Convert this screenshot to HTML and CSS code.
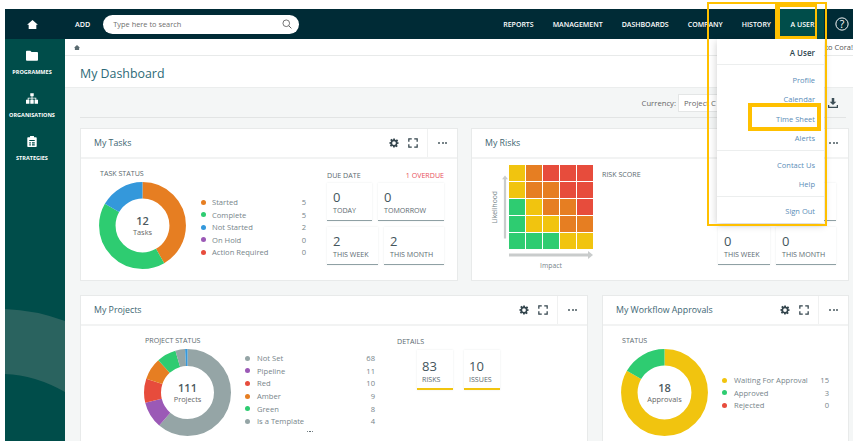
FILE: index.html
```html
<!DOCTYPE html>
<html lang="en">
<head>
<meta charset="utf-8">
<title>My Dashboard</title>
<link rel="stylesheet" href="styles.css">
</head>
<body>
<svg class="defs" width="0" height="0" aria-hidden="true">
  <defs>
    <symbol id="i-gear" viewBox="0 0 24 24"><path fill="currentColor" fill-rule="evenodd" d="M10 1h4l.6 3.2 1.9.8 2.7-1.9 2.8 2.8-1.9 2.7.8 1.9L23 10v4l-3.1.6-.8 1.9 1.9 2.7-2.8 2.8-2.7-1.9-1.9.8L14 23h-4l-.6-3.1-1.9-.8-2.7 1.9-2.8-2.8 1.9-2.7-.8-1.9L1 14v-4l3.1-.6.8-1.9-1.9-2.7 2.8-2.8 2.7 1.9 1.9-.8zM12 7.5a4.5 4.5 0 1 0 0 9 4.5 4.5 0 0 0 0-9z"/></symbol>
    <symbol id="i-expand" viewBox="0 0 24 24"><path fill="none" stroke="currentColor" stroke-width="3" d="M2 9V2h7M15 2h7v7M22 15v7h-7M9 22H2v-7"/></symbol>
    <symbol id="i-home" viewBox="0 0 24 20"><path fill="currentColor" d="M12 0 0 10.5h3.5V20h17v-9.500H24z"/></symbol>
  </defs>
</svg>

<div class="app">
  <header class="topbar">
    <a class="brand"><svg class="brand-icon"><use href="#i-home"/></svg></a>
    <a class="add">ADD</a>
    <div class="search">
      <span>Type here to search</span>
      <svg class="search-icon" viewBox="0 0 16 16"><circle cx="6.800" cy="6.800" r="5.300" fill="none" stroke="currentColor" stroke-width="1.300"/><path d="m10.800 10.800 4.200 4.200" stroke="currentColor" stroke-width="1.500"/></svg>
    </div>
    <nav class="nav">
      <a>REPORTS</a><a>MANAGEMENT</a><a>DASHBOARDS</a><a>COMPANY</a><a>HISTORY</a>
      <a class="nav-active">A USER</a>
    </nav>
    <svg class="help" viewBox="0 0 16 16"><circle cx="8" cy="8" r="7" fill="none" stroke="currentColor" stroke-width="1.100"/><text x="8" y="12.200" text-anchor="middle" class="help-q">?</text></svg>
  </header>

  <div class="layout">
    <aside class="sidebar">
      <svg class="wave" viewBox="0 0 60 402" preserveAspectRatio="none"><path d="M0 270Q30 271 60 282V353Q30 336 0 335z"/></svg>
      <a class="side-item">
        <svg class="side-icon" viewBox="0 0 14 12"><path fill="currentColor" d="M0 1.500A1 1 0 0 1 1 .5h4l1.500 1.500H13a1 1 0 0 1 1 1V11a1 1 0 0 1-1 1H1a1 1 0 0 1-1-1z"/></svg>
        <span>PROGRAMMES</span>
      </a>
      <a class="side-item">
        <svg class="side-icon" viewBox="0 0 14 12"><path fill="currentColor" d="M5 0h4v3.500H7.500V5H12v2.500h2V12h-4V7.500h1V6H7.500v1.500H9V12H5V7.500h1.500V6H3v1.500h1V12H0V7.500h2V5h4.500V3.500H5z"/></svg>
        <span>ORGANISATIONS</span>
      </a>
      <a class="side-item">
        <svg class="side-icon" viewBox="0 0 14 14"><path fill="currentColor" fill-rule="evenodd" d="M2 1.500h2.500V0h5v1.500H12a1 1 0 0 1 1 1V13a1 1 0 0 1-1 1H2a1 1 0 0 1-1-1V2.500a1 1 0 0 1 1-1zM3.500 5v1.500h7V5zm0 3v1.500h2V8zm3.500 0v1.500h3.500V8zm-3.500 2.500V12h2v-1.500zm3.500 0V12h3.500v-1.500z"/></svg>
        <span>STRATEGIES</span>
      </a>
    </aside>

    <main class="main">
      <div class="crumbs">
        <svg class="crumb-home"><use href="#i-home"/></svg>
        <span class="welcome">to Cora!</span>
      </div>
      <div class="title-row"><h1>My Dashboard</h1></div>
      <div class="toolbar">
        <span class="currency-label">Currency:</span>
        <div class="currency-select">Project C</div>
        <svg class="download" viewBox="0 0 12 12"><path fill="currentColor" d="M4.500 0h3v4.500H10L6 8.500 2 4.500h2.500zM0 8.500h1.500v2h9v-2H12V12H0z"/></svg>
      </div>

      <div class="dash">
        <section class="row row-top">
          <article class="card">
            <header class="card-head">
              <h2>My Tasks</h2>
              <div class="tools"><svg class="tool"><use href="#i-gear"/></svg><svg class="tool"><use href="#i-expand"/></svg></div>
              <div class="more"><i></i><i></i><i></i></div>
            </header>
            <div class="card-body tasks-body">
              <div class="status">
                <h3>TASK STATUS</h3>
                <div class="donut">
                  <svg viewBox="0 0 87 87">
                    <g transform="rotate(-90 43.500 43.500)" fill="none" stroke-width="16.500">
                      <circle cx="43.500" cy="43.500" r="35.200" pathLength="12" stroke="#e67e22" stroke-dasharray="5 7"/>
                      <circle cx="43.500" cy="43.500" r="35.200" pathLength="12" stroke="#2ecc71" stroke-dasharray="5 7" stroke-dashoffset="-5"/>
                      <circle cx="43.500" cy="43.500" r="35.200" pathLength="12" stroke="#3498db" stroke-dasharray="2 10" stroke-dashoffset="-10"/>
                    </g>
                  </svg>
                  <div class="donut-label"><b>12</b><span>Tasks</span></div>
                </div>
              </div>
              <ul class="legend tasks-legend">
                <li><i class="dot orange"></i><span>Started</span><em>5</em></li>
                <li><i class="dot green"></i><span>Complete</span><em>5</em></li>
                <li><i class="dot blue"></i><span>Not Started</span><em>2</em></li>
                <li><i class="dot purple"></i><span>On Hold</span><em>0</em></li>
                <li><i class="dot red"></i><span>Action Required</span><em>0</em></li>
              </ul>
              <div class="due tasks-due">
                <div class="due-head"><h3>DUE DATE</h3><span class="overdue">1 OVERDUE</span></div>
                <div class="tile-row">
                  <div class="tile w45"><b>0</b><span>TODAY</span></div>
                  <div class="tile w66"><b>0</b><span>TOMORROW</span></div>
                </div>
                <div class="tile-row">
                  <div class="tile w51"><b>2</b><span>THIS WEEK</span></div>
                  <div class="tile w60"><b>2</b><span>THIS MONTH</span></div>
                </div>
              </div>
            </div>
          </article>

          <article class="card">
            <header class="card-head">
              <h2>My Risks</h2>
              <div class="tools tools-hidden"></div>
              <div class="more"><i></i><i></i><i></i></div>
            </header>
            <div class="card-body risks-body">
              <div class="plot">
                <span class="y-label">Likelihood</span>
                <svg class="y-arrow" viewBox="0 0 8 84"><path d="M4 0 8 5H5.500V84h-3V5H0z"/></svg>
                <div class="matrix">
                  <i class="y"></i><i class="o"></i><i class="r"></i><i class="r"></i><i class="r"></i>
                  <i class="y"></i><i class="o"></i><i class="o"></i><i class="r"></i><i class="r"></i>
                  <i class="g"></i><i class="y"></i><i class="o"></i><i class="o"></i><i class="r"></i>
                  <i class="g"></i><i class="y"></i><i class="y"></i><i class="o"></i><i class="o"></i>
                  <i class="g"></i><i class="g"></i><i class="g"></i><i class="y"></i><i class="y"></i>
                </div>
                <svg class="x-arrow" viewBox="0 0 84 8"><path d="M84 4 79 8V5.500H0v-3h79V0z"/></svg>
                <span class="x-label">Impact</span>
              </div>
              <h3 class="risk-score">RISK SCORE</h3>
              <div class="due risks-due">
                <div class="due-head"></div>
                <div class="tile-row">
                  <div class="tile w52"></div>
                  <div class="tile w60"></div>
                </div>
                <div class="tile-row">
                  <div class="tile w52"><b>0</b><span>THIS WEEK</span></div>
                  <div class="tile w60"><b>0</b><span>THIS MONTH</span></div>
                </div>
              </div>
            </div>
          </article>
        </section>

        <section class="row row-bottom">
          <article class="card">
            <header class="card-head">
              <h2>My Projects</h2>
              <div class="tools"><svg class="tool"><use href="#i-gear"/></svg><svg class="tool"><use href="#i-expand"/></svg></div>
              <div class="more"><i></i><i></i><i></i></div>
            </header>
            <div class="card-body projects-body">
              <div class="status">
                <h3>PROJECT STATUS</h3>
                <div class="donut">
                  <svg viewBox="0 0 87 87">
                    <g transform="rotate(-90 43.500 43.500)" fill="none" stroke-width="17">
                      <circle cx="43.500" cy="43.500" r="35" pathLength="111" stroke="#95a5a6" stroke-dasharray="68 43"/>
                      <circle cx="43.500" cy="43.500" r="35" pathLength="111" stroke="#9b59b6" stroke-dasharray="11 100" stroke-dashoffset="-68"/>
                      <circle cx="43.500" cy="43.500" r="35" pathLength="111" stroke="#e74c3c" stroke-dasharray="10 101" stroke-dashoffset="-79"/>
                      <circle cx="43.500" cy="43.500" r="35" pathLength="111" stroke="#e67e22" stroke-dasharray="9 102" stroke-dashoffset="-89"/>
                      <circle cx="43.500" cy="43.500" r="35" pathLength="111" stroke="#2ecc71" stroke-dasharray="8 103" stroke-dashoffset="-98"/>
                      <circle cx="43.500" cy="43.500" r="35" pathLength="111" stroke="#95a5a6" stroke-dasharray="4 107" stroke-dashoffset="-106"/>
                      <circle cx="43.500" cy="43.500" r="35" pathLength="111" stroke="#3498db" stroke-dasharray="1 110" stroke-dashoffset="-110"/>
                    </g>
                  </svg>
                  <div class="donut-label"><b>111</b><span>Projects</span></div>
                </div>
              </div>
              <div class="legend-wrap">
                <ul class="legend projects-legend">
                  <li><i class="dot grey"></i><span>Not Set</span><em>68</em></li>
                  <li><i class="dot purple"></i><span>Pipeline</span><em>11</em></li>
                  <li><i class="dot red"></i><span>Red</span><em>10</em></li>
                  <li><i class="dot orange"></i><span>Amber</span><em>9</em></li>
                  <li><i class="dot green"></i><span>Green</span><em>8</em></li>
                  <li><i class="dot grey"></i><span>Is a Template</span><em>4</em></li>
                </ul>
                <div class="legend-more"><i></i><i></i><i></i></div>
              </div>
              <div class="details">
                <h3>DETAILS</h3>
                <div class="tile-row details-tiles">
                  <div class="tile tile-yellow"><b>83</b><span>RISKS</span></div>
                  <div class="tile tile-yellow"><b>10</b><span>ISSUES</span></div>
                </div>
              </div>
            </div>
          </article>

          <article class="card">
            <header class="card-head">
              <h2>My Workflow Approvals</h2>
              <div class="tools"><svg class="tool"><use href="#i-gear"/></svg><svg class="tool"><use href="#i-expand"/></svg></div>
              <div class="more"><i></i><i></i><i></i></div>
            </header>
            <div class="card-body workflow-body">
              <div class="status">
                <h3>STATUS</h3>
                <div class="donut">
                  <svg viewBox="0 0 87 87">
                    <g transform="rotate(-90 43.500 43.500)" fill="none" stroke-width="16.500">
                      <circle cx="43.500" cy="43.500" r="35.200" pathLength="18" stroke="#f1c40f" stroke-dasharray="15 3"/>
                      <circle cx="43.500" cy="43.500" r="35.200" pathLength="18" stroke="#2ecc71" stroke-dasharray="3 15" stroke-dashoffset="-15"/>
                    </g>
                  </svg>
                  <div class="donut-label"><b>18</b><span>Approvals</span></div>
                </div>
              </div>
              <ul class="legend workflow-legend">
                <li><i class="dot yellow"></i><span>Waiting For Approval</span><em>15</em></li>
                <li><i class="dot green"></i><span>Approved</span><em>3</em></li>
                <li><i class="dot red"></i><span>Rejected</span><em>0</em></li>
              </ul>
            </div>
          </article>
        </section>
      </div>
    </main>
  </div>
</div>

<div class="menu">
  <div class="menu-user">A User</div>
  <ul class="menu-group group-a"><li>Profile</li><li>Calendar</li><li>Time Sheet</li><li>Alerts</li></ul>
  <ul class="menu-group group-b"><li>Contact Us</li><li>Help</li></ul>
  <ul class="menu-group group-c"><li>Sign Out</li></ul>
</div>

<div class="frame frame-menu"></div>
<div class="frame frame-user"></div>
<div class="frame frame-sheet"></div>
</body>
</html>
```
FILE: styles.css
```css
* { box-sizing: border-box; }
html, body { margin: 0; height: 444px; overflow: hidden; background: #fff; }
body { position: relative; padding: 9px 0 0 5px; font-family: "Open Sans", "Noto Sans", sans-serif; font-size: 8px; color: #666; }
.defs { position: absolute; }
ul { list-style: none; margin: 0; padding: 0; }
h1, h2, h3 { margin: 0; font-weight: 400; }
em { font-style: normal; }

.app { height: 432px; width: 848px; display: flex; flex-direction: column; overflow: hidden; }

/* top bar */
.topbar { height: 30px; flex: none; background: #002b36; color: #fff; display: flex; align-items: center; }
.brand { width: 60px; padding-right: 6px; display: flex; justify-content: center; }
.brand-icon { width: 11px; height: 9px; color: #fff; }
.add { margin-left: 10px; font-size: 7.2px; font-weight: 600; }
.search { margin-left: 13px; width: 196px; height: 19px; border-radius: 10px; background: #fff; color: #6f6f6f; display: flex; align-items: center; justify-content: space-between; padding: 0 7px 0 10px; font-size: 7.4px; }
.search-icon { width: 10px; height: 10px; color: #555; }
.nav { margin-left: auto; display: flex; align-items: center; height: 100%; gap: 19px; font-size: 7px; font-weight: 600; }
.nav-active { align-self: stretch; width: 44px; margin-left: -10px; background: #004d4a; display: flex; align-items: center; justify-content: center; padding-left: 1px; }
.help { width: 14px; height: 14px; margin: 0 4px 0 11px; color: #fff; }
.help-q { font-family: "Open Sans", sans-serif; font-size: 12px; fill: #fff; }

/* sidebar */
.layout { flex: 1; display: flex; min-height: 0; }
.sidebar { position: relative; width: 60px; flex: none; background: #004d4a; color: #fff; padding: 11px 6px 0 0; display: flex; flex-direction: column; gap: 17px; overflow: hidden; }
.wave { position: absolute; left: 0; top: 0; width: 60px; height: 402px; fill: #2a635f; }
.side-item { position: relative; height: 26px; display: flex; flex-direction: column; align-items: center; justify-content: space-between; font-size: 5.500px; font-weight: 700; white-space: nowrap; line-height: 8px; }
.side-icon { width: 12px; height: 11px; }

/* main */
.main { flex: 1; min-width: 0; background: #f4f6f6; display: flex; flex-direction: column; }
.crumbs { height: 17px; flex: none; background: #fff; border-bottom: 1px solid #e8eaea; display: flex; align-items: center; justify-content: space-between; padding-left: 9px; }
.crumb-home { width: 6px; height: 5px; color: #5a6b70; }
.welcome { font-size: 7.5px; color: #555; white-space: nowrap; }
.title-row { height: 32px; flex: none; background: #fff; border-bottom: 1px solid #ebeded; display: flex; align-items: center; padding: 3px 0 0 15px; }
h1 { font-size: 12.4px; color: #2d6a77; }
.toolbar { height: 30px; flex: none; margin: 0 7px 0 15px; border-bottom: 1px solid #e2e4e4; display: flex; align-items: center; justify-content: flex-end; padding-right: 8px; }
.currency-label { font-size: 7.7px; margin-right: 2px; color: #666; }
.currency-select { width: 140px; height: 18px; background: #fff; border: 1px solid #e4e6e6; padding: 3px 5px; font-size: 7.7px; color: #666; }
.download { width: 10px; height: 10px; margin-left: 10px; color: #3d4f57; }

.dash { padding: 10px 4px 0 15px; display: flex; flex-direction: column; gap: 14px; }
.row { display: grid; }
.row-top { grid-template-columns: 378px 378px; gap: 13px; height: 153px; }
.row-bottom { grid-template-columns: 508px 247px; gap: 14px; height: 170px; }

/* card */
.card { background: #fff; border: 1px solid #e8eaea; display: flex; flex-direction: column; min-width: 0; }
.card-head { height: 30px; flex: none; border-bottom: 2px solid #f2f3f3; display: flex; align-items: stretch; padding-left: 13px; }
h2 { font-size: 8.8px; color: #3d6672; align-self: center; }
.tools { margin-left: auto; display: flex; align-items: center; gap: 9px; padding-right: 9px; color: #34454d; }
.tool { width: 10px; height: 10px; }
.more { width: 30px; border-left: 1px solid #f0f1f1; display: flex; align-items: center; justify-content: center; gap: 1.500px; }
.more i, .legend-more i { width: 2px; height: 2px; border-radius: 50%; background: #4a5a60; }
.card-body { display: flex; flex: 1; min-height: 0; }

h3 { font-size: 7.1px; color: #5c6a70; white-space: nowrap; line-height: 10px; }
.status h3 { margin-left: 1px; margin-bottom: 4px; }
.status { flex: none; }
.donut { display: grid; width: 87px; height: 87px; place-items: center; }
.donut > * { grid-area: 1 / 1; }
.donut svg { width: 87px; height: 87px; display: block; }
.donut-label { display: flex; flex-direction: column; align-items: center; line-height: 1; color: #666; padding-top: 1px; }
.donut-label b { font-size: 11px; font-weight: 600; color: #4d5a60; margin-bottom: 3px; }
.donut-label span { font-size: 7.400px; }

/* legend */
.legend li { display: grid; grid-template-columns: 11px 1fr auto; align-items: center; height: 12.500px; font-size: 7.600px; color: #77858a; white-space: nowrap; }
.dot { width: 5px; height: 5px; border-radius: 50%; }
.orange { background: #e67e22; } .green { background: #2ecc71; } .blue { background: #3498db; }
.purple { background: #9b59b6; } .red { background: #e74c3c; } .grey { background: #95a5a6; } .yellow { background: #f1c40f; }

.tasks-body { padding: 9px 0 0 18px; }
.tasks-legend { width: 105px; margin: 28px 0 0 15px; }
.due { flex: none; display: flex; flex-direction: column; gap: 6px; }
.tasks-due { width: 117px; margin: 2px 0 0 21px; }
.due-head { display: flex; justify-content: space-between; margin-bottom: -3px; min-height: 10px; }
.overdue { font-size: 7.100px; color: #e8505b; line-height: 10px; }
.tile-row { display: flex; gap: 6px; }
.tile { height: 38px; background: #fff; box-shadow: 0 0 2px #e9ecec; border-bottom: 1px solid #8fa0a4; display: flex; flex-direction: column; justify-content: center; padding: 2px 0 0 6px; line-height: 1; }
.tile b { font-size: 13px; font-weight: 400; color: #44555c; margin-bottom: 3px; }
.tile span { font-size: 7.100px; color: #5c6a70; white-space: nowrap; }
.w45 { width: 45px; } .w66 { width: 66px; } .w51 { width: 51px; } .w60 { width: 60px; } .w52 { width: 52px; }

/* risks */
.tools-hidden { padding: 0; }
.risks-body { padding: 6px 12px 0 16px; }
.plot { flex: none; display: grid; grid-template-columns: 12px 6px 84px; grid-template-rows: 84px 12px 12px; column-gap: 1.500px; }
.y-label { grid-row: 1; grid-column: 1; writing-mode: vertical-rl; transform: rotate(180deg); justify-self: center; align-self: center; font-size: 6.8px; color: #77858a; }
.y-arrow { grid-row: 1; grid-column: 2; width: 6px; height: 84px; fill: #c9cccc; }
.matrix { grid-row: 1; grid-column: 3; display: grid; grid-template-columns: repeat(5, 1fr); grid-template-rows: repeat(5, 1fr); gap: 1px; }
.matrix .y { background: #f1c40f; } .matrix .o { background: #e67e22; } .matrix .r { background: #e74c3c; } .matrix .g { background: #2ecc71; }
.x-arrow { grid-row: 2; grid-column: 3; width: 84px; height: 8px; margin-top: 2px; fill: #c9cccc; }
.x-label { grid-row: 3; grid-column: 3; justify-self: center; font-size: 6.8px; color: #77858a; line-height: 10px; }
.risk-score { margin: 4px 0 0 9px; }
.risks-due { width: 118px; margin: 5px 0 0 auto; }

/* projects */
.projects-body { padding: 9px 0 0 63px; }
.legend-wrap { width: 130px; margin: 17px 0 0 14px; }
.projects-legend li { grid-template-columns: 12px 1fr auto; height: 12.600px; }
.legend-more { display: flex; justify-content: center; gap: 1px; margin-top: 3px; }
.legend-more i { width: 1.500px; height: 1.500px; }
.details { margin: 1px 0 0 22px; }
.details-tiles { margin: 4px 0 0 20px; gap: 11px; }
.tile-yellow { width: 36px; height: 40px; border-bottom: 2px solid #f1c40f; padding: 5px 0 0 5px; }

/* workflow */
.workflow-body { padding: 9px 0 0 18px; }
.workflow-legend { width: 107px; margin: 39px 0 0 14px; }
.workflow-legend li { grid-template-columns: 12px 1fr auto; }

/* dropdown */
.menu { position: absolute; left: 717px; top: 39px; width: 107px; height: 184px; background: #fff; box-shadow: 0 2px 8px rgba(0, 0, 0, .2); text-align: right; font-size: 7.500px; color: #5b8db8; padding-right: 9px; }
.menu-user { height: 26px; margin-right: -9px; padding: 1px 9px 0 0; display: flex; align-items: center; justify-content: flex-end; font-size: 8px; font-weight: 600; color: #2f4750; border-bottom: 1px solid #eceeee; }
.menu-group li { height: 19.500px; display: flex; align-items: center; justify-content: flex-end; }
.menu-group { margin-right: -9px; padding-right: 9px; border-bottom: 1px solid #eceeee; }
.group-a { padding-top: 5px; padding-bottom: 2px; }
.group-b { padding-top: 4px; padding-bottom: 2px; }
.group-c { padding-top: 4px; border-bottom: 0; }

/* highlight frames */
.frame { position: absolute; border-style: solid; border-color: #ffc000; }
.frame-menu { left: 707px; top: 2px; width: 120px; height: 224px; border-width: 2px; }
.frame-user { left: 775px; top: 2px; width: 42px; height: 37px; border-width: 5px 2px 3px 5px; }
.frame-sheet { left: 748px; top: 103px; width: 73px; height: 28px; border-width: 4px; }
```
